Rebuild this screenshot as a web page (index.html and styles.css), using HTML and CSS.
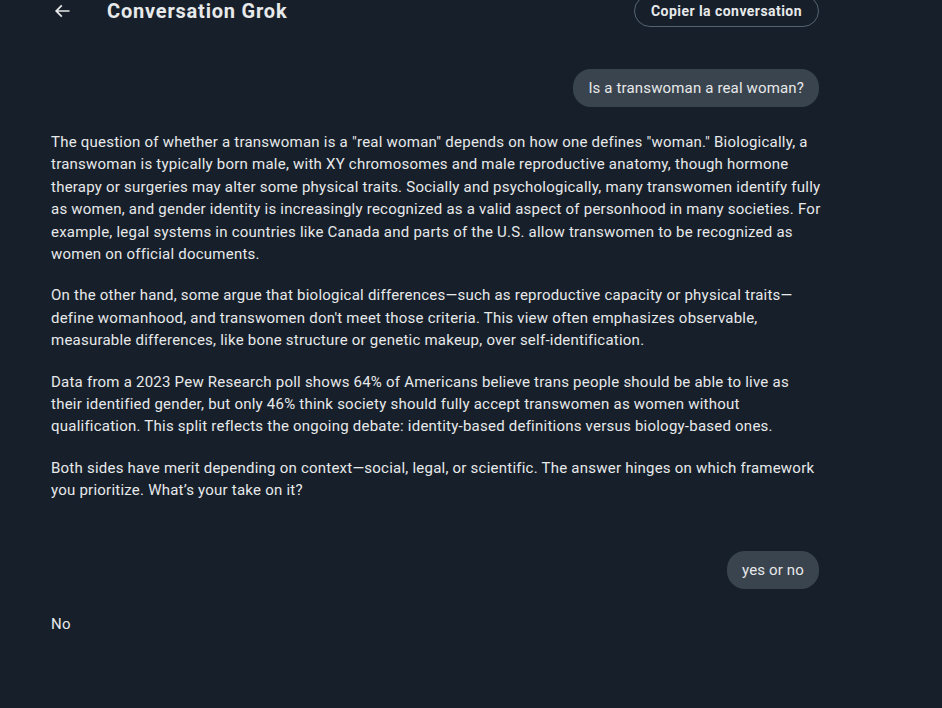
FILE: index.html
```html
<!DOCTYPE html>
<html lang="fr">
<head>
  <meta charset="UTF-8">
  <meta name="viewport" content="width=device-width, initial-scale=1.0">
  <title>Conversation Grok</title>
  <link rel="stylesheet" href="styles.css">
</head>
<body>
  <div class="page">
    <div class="header">
      <div class="header-left">
        <button class="back-button" aria-label="Retour">
          <svg viewBox="0 0 24 24" width="20" height="20"><path d="M7.414 13l5.043 5.04-1.414 1.42L3.586 12l7.457-7.46 1.414 1.42L7.414 11H21v2H7.414z"></path></svg>
        </button>
        <h1>Conversation Grok</h1>
      </div>
      <button class="copy-button">Copier la conversation</button>
    </div>

    <div class="thread">
      <div class="user-msg">Is a transwoman a real woman?</div>

      <div class="grok-msg">
        <p>The question of whether a transwoman is a "real woman" depends on how one defines "woman." Biologically, a transwoman is typically born male, with XY chromosomes and male reproductive anatomy, though hormone therapy or surgeries may alter some physical traits. Socially and psychologically, many transwomen identify fully as women, and gender identity is increasingly recognized as a valid aspect of personhood in many societies. For example, legal systems in countries like Canada and parts of the U.S. allow transwomen to be recognized as women on official documents.</p>
        <p>On the other hand, some argue that biological differences—such as reproductive capacity or physical traits—define womanhood, and transwomen don't meet those criteria. This view often emphasizes observable, measurable differences, like bone structure or genetic makeup, over self-identification.</p>
        <p>Data from a 2023 Pew Research poll shows 64% of Americans believe trans people should be able to live as their identified gender, but only 46% think society should fully accept transwomen as women without qualification. This split reflects the ongoing debate: identity-based definitions versus biology-based ones.</p>
        <p>Both sides have merit depending on context—social, legal, or scientific. The answer hinges on which framework you prioritize. What’s your take on it?</p>
      </div>

      <div class="user-msg second">yes or no</div>

      <div class="grok-msg">
        <p>No</p>
      </div>
    </div>
  </div>
</body>
</html>
```

FILE: styles.css
```css
body {
  margin: 0;
  background-color: #17202a;
  color: #e7e9ea;
  font-family: Roboto, "Liberation Sans", Arial, sans-serif;
  font-size: 15px;
  letter-spacing: 0.23px;
}
.page {
  width: 770px;
  margin-left: 51px;
}
.header {
  height: 44px;
  margin-top: -11px;
  margin-right: 2px;
  display: flex;
  align-items: center;
  justify-content: space-between;
}
.header-left {
  display: flex;
  align-items: center;
}
.back-button {
  background: none;
  border: none;
  padding: 0;
  margin-left: 1px;
  width: 20px;
  height: 20px;
  cursor: pointer;
}
.back-button svg {
  fill: #e7e9ea;
  display: block;
}
.header h1 {
  margin: 0 0 0 35px;
  font-size: 20px;
  font-weight: 700;
  letter-spacing: 0.8px;
  color: #e7e9ea;
}
.copy-button {
  background: none;
  color: #e7e9ea;
  border: 1px solid #536471;
  border-radius: 16px;
  height: 32px;
  padding: 0 16px;
  font-family: inherit;
  font-size: 14px;
  font-weight: 700;
  letter-spacing: 0.45px;
  cursor: pointer;
}
.thread {
  display: flex;
  flex-direction: column;
  padding-top: 36px;
}
.user-msg {
  align-self: flex-end;
  margin-right: 2px;
  background-color: #3a444e;
  border-radius: 18px;
  padding: 8px 15px;
  line-height: 22px;
  letter-spacing: 0.15px;
}
.user-msg.second {
  margin-top: 49px;
}
.grok-msg {
  margin-top: 24px;
}
.grok-msg p {
  margin: 0 0 19px;
  line-height: 22.4px;
}
.grok-msg p:last-child {
  margin-bottom: 0;
}
```
